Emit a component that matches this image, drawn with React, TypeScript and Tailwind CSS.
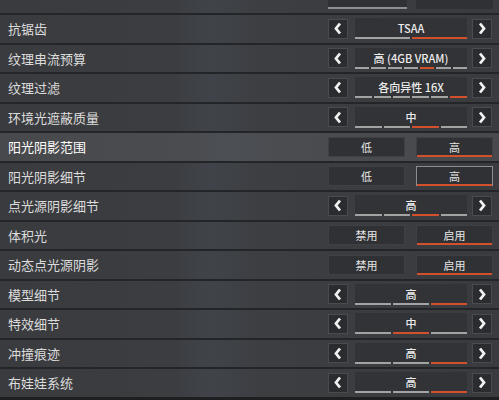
import React from 'react';

type Row =
  | { label: string; kind: 'step'; value: string; count: number; active: number }
  | { label: string; kind: 'toggle'; options: string[]; active: number; highlight?: boolean; outlined?: boolean };

const rows: Row[] = [
  { label: '抗锯齿', kind: 'step', value: 'TSAA', count: 2, active: 1 },
  { label: '纹理串流预算', kind: 'step', value: '高 (4GB VRAM)', count: 7, active: 4 },
  { label: '纹理过滤', kind: 'step', value: '各向异性 16X', count: 6, active: 5 },
  { label: '环境光遮蔽质量', kind: 'step', value: '中', count: 4, active: 2 },
  { label: '阳光阴影范围', kind: 'toggle', options: ['低', '高'], active: 1, highlight: true },
  { label: '阳光阴影细节', kind: 'toggle', options: ['低', '高'], active: 1, outlined: true },
  { label: '点光源阴影细节', kind: 'step', value: '高', count: 4, active: 2 },
  { label: '体积光', kind: 'toggle', options: ['禁用', '启用'], active: 1 },
  { label: '动态点光源阴影', kind: 'toggle', options: ['禁用', '启用'], active: 1 },
  { label: '模型细节', kind: 'step', value: '高', count: 3, active: 2 },
  { label: '特效细节', kind: 'step', value: '中', count: 3, active: 1 },
  { label: '冲撞痕迹', kind: 'step', value: '高', count: 3, active: 2 },
  { label: '布娃娃系统', kind: 'step', value: '高', count: 3, active: 2 },
];

const font = { fontFamily: '"Noto Sans CJK SC", "Noto Sans", sans-serif' };

function Chevron({ dir }: { dir: 'left' | 'right' }) {
  return (
    <svg width="8" height="13" viewBox="0 0 8 13">
      <polyline
        points={dir === 'left' ? '6,1.5 2,6.5 6,11.5' : '2,1.5 6,6.5 2,11.5'}
        fill="none"
        stroke="#f2f2f2"
        strokeWidth="2.8"
        strokeLinejoin="miter"
      />
    </svg>
  );
}

function ArrowBox({ dir }: { dir: 'left' | 'right' }) {
  return (
    <div className="w-[20px] h-[20px] flex items-center justify-center bg-[#2b2c2f] border border-[#4a4b4e]">
      <Chevron dir={dir} />
    </div>
  );
}

function Stepper({ value, count, active }: { value: string; count: number; active: number }) {
  return (
    <div className="flex items-center w-[165px]">
      <ArrowBox dir="left" />
      <div className="ml-[7px] w-[112px] h-[21px] bg-[#323336] flex flex-col justify-between">
        <div className="flex-1 flex items-center justify-center text-[11px] font-medium text-[#ececec] leading-none pt-[2px]">
          {value}
        </div>
        <div className="flex gap-[2px] h-[2px]">
          {Array.from({ length: count }).map((_, i) => (
            <div key={i} className={`flex-1 ${i === active ? 'bg-[#d2502c]' : 'bg-[#a3a3a3]'}`} />
          ))}
        </div>
      </div>
      <div className="ml-[5px]">
        <ArrowBox dir="right" />
      </div>
    </div>
  );
}

function Toggle({ options, active, outlined }: { options: string[]; active: number; outlined?: boolean }) {
  return (
    <div className="flex justify-between w-[165px]">
      {options.map((o, i) => (
        <div
          key={o}
          className={`relative w-[77px] h-[20px] flex items-center justify-center text-[11px] text-[#e6e6e6] bg-[#303134] border ${
            outlined && i === active ? 'border-[#8c8d8f]' : 'border-[#3f4043]'
          }`}
        >
          {o}
          {i === active && <div className="absolute left-0 right-0 bottom-[-1px] h-[2px] bg-[#d2502c]" />}
        </div>
      ))}
    </div>
  );
}

export default function App() {
  return (
    <div className="w-[499px] h-[400px] overflow-hidden bg-[#1e1f21]" style={font}>
      {/* row scrolled mostly out of view */}
      <div className="h-[13px] flex justify-end items-end pr-[6px] bg-[linear-gradient(90deg,#3a3b3e_0%,#3b3d41_35%,#40444a_42%,#3c3e42_52%,#3a3b3e_100%)] overflow-hidden">
        <div className="flex justify-between w-[165px] mb-[4px]">
          <div className="w-[79px] h-[10px] bg-[#303134] border-b-2 border-[#8f8f8f]" />
          <div className="w-[77px] h-[10px] bg-[#303134]" />
        </div>
      </div>
      {rows.map((r) => (
        <div
          key={r.label}
          className={`h-[29.5px] border-t-2 border-[#242528] flex items-center justify-between pl-[8px] pr-[6px] ${
            r.kind === 'toggle' && r.highlight
              ? 'bg-[linear-gradient(90deg,#48494c_0%,#4a4c50_40%,#4c5056_45%,#4a4c50_55%,#48494c_100%)]'
              : 'bg-[linear-gradient(90deg,#3a3b3e_0%,#3b3d41_35%,#40444a_42%,#3c3e42_52%,#3a3b3e_100%)]'
          }`}
        >
          <span
            className={`text-[13px] ${
              r.kind === 'toggle' && r.highlight ? 'text-white' : 'text-[#dcdcdc]'
            }`}
          >
            {r.label}
          </span>
          {r.kind === 'step' ? (
            <Stepper value={r.value} count={r.count} active={r.active} />
          ) : (
            <Toggle options={r.options} active={r.active} outlined={r.outlined} />
          )}
        </div>
      ))}
    </div>
  );
}
